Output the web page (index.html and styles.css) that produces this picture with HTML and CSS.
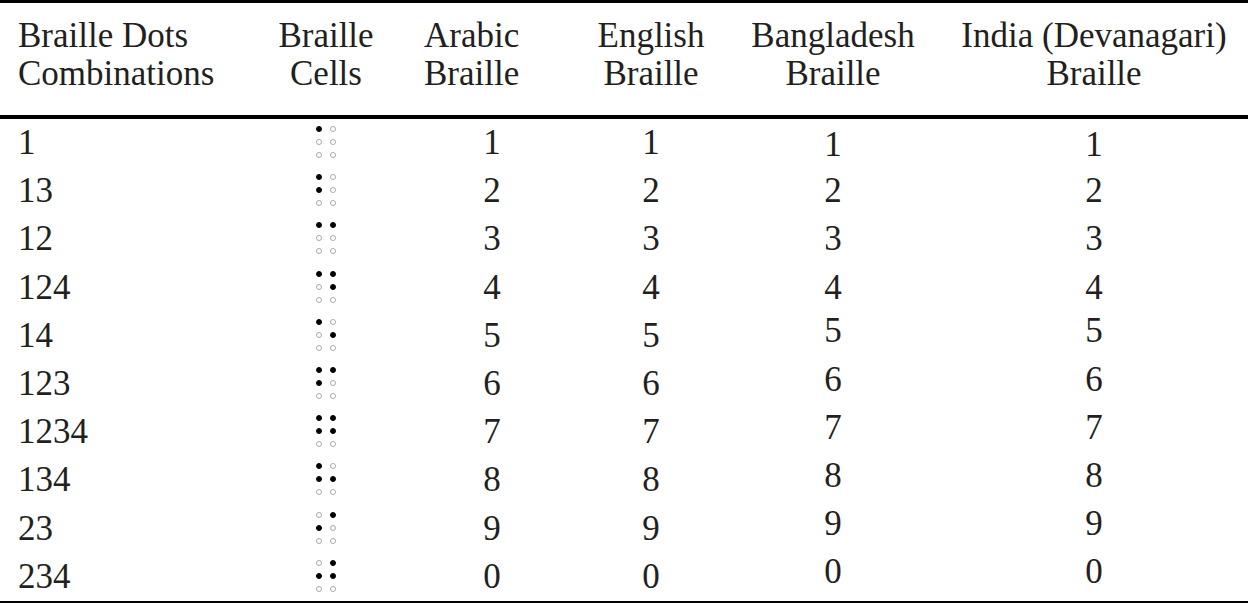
FILE: index.html
```html
<!DOCTYPE html>
<html>
<head>
<meta charset="utf-8">
<link rel="stylesheet" href="styles.css">
</head>
<body>
<div class="tbl">
  <div class="head">
    <div class="h c1">Braille Dots<br>Combinations</div>
    <div class="h c2">Braille<br>Cells</div>
    <div class="h c3">Arabic<br>Braille</div>
    <div class="h c4">English<br>Braille</div>
    <div class="h c5">Bangladesh<br>Braille</div>
    <div class="h c6">India (Devanagari)<br>Braille</div>
  </div>
  <div class="body">
    <div class="row"><div class="c1">1</div><div class="c2"><div class="cell"><i class="on"></i><i></i><i></i><i></i><i></i><i></i></div></div><div class="c3">1</div><div class="c4">1</div><div class="c5 lo">1</div><div class="c6 lo">1</div></div>
    <div class="row"><div class="c1">13</div><div class="c2"><div class="cell"><i class="on"></i><i></i><i class="on"></i><i></i><i></i><i></i></div></div><div class="c3">2</div><div class="c4">2</div><div class="c5">2</div><div class="c6">2</div></div>
    <div class="row"><div class="c1">12</div><div class="c2"><div class="cell"><i class="on"></i><i class="on"></i><i></i><i></i><i></i><i></i></div></div><div class="c3">3</div><div class="c4">3</div><div class="c5">3</div><div class="c6">3</div></div>
    <div class="row"><div class="c1">124</div><div class="c2"><div class="cell"><i class="on"></i><i class="on"></i><i></i><i class="on"></i><i></i><i></i></div></div><div class="c3">4</div><div class="c4">4</div><div class="c5">4</div><div class="c6">4</div></div>
    <div class="row"><div class="c1">14</div><div class="c2"><div class="cell"><i class="on"></i><i></i><i></i><i class="on"></i><i></i><i></i></div></div><div class="c3">5</div><div class="c4">5</div><div class="c5 hi">5</div><div class="c6 hi">5</div></div>
    <div class="row"><div class="c1">123</div><div class="c2"><div class="cell"><i class="on"></i><i class="on"></i><i class="on"></i><i></i><i></i><i></i></div></div><div class="c3">6</div><div class="c4">6</div><div class="c5 hi">6</div><div class="c6 hi">6</div></div>
    <div class="row"><div class="c1">1234</div><div class="c2"><div class="cell"><i class="on"></i><i class="on"></i><i class="on"></i><i class="on"></i><i></i><i></i></div></div><div class="c3">7</div><div class="c4">7</div><div class="c5 hi">7</div><div class="c6 hi">7</div></div>
    <div class="row"><div class="c1">134</div><div class="c2"><div class="cell"><i class="on"></i><i></i><i class="on"></i><i class="on"></i><i></i><i></i></div></div><div class="c3">8</div><div class="c4">8</div><div class="c5 hi">8</div><div class="c6 hi">8</div></div>
    <div class="row"><div class="c1">23</div><div class="c2"><div class="cell"><i></i><i class="on"></i><i class="on"></i><i></i><i></i><i></i></div></div><div class="c3">9</div><div class="c4">9</div><div class="c5 hi">9</div><div class="c6 hi">9</div></div>
    <div class="row"><div class="c1">234</div><div class="c2"><div class="cell"><i></i><i class="on"></i><i class="on"></i><i class="on"></i><i></i><i></i></div></div><div class="c3">0</div><div class="c4">0</div><div class="c5 hi">0</div><div class="c6 hi">0</div></div>
  </div>
</div>
</body>
</html>
```

FILE: styles.css
```css
html, body {
  margin: 0;
  padding: 0;
  background: #ffffff;
}
body {
  font-family: "Liberation Serif", "Times New Roman", serif;
  font-size: 35px;
  color: #231f20;
}
.tbl {
  width: 1248px;
  border-top: 3px solid #000;
  border-bottom: 3px solid #000;
}
.head, .row {
  display: grid;
  grid-template-columns: 260px 132px 168px 182px 182px 324px;
}
.head {
  border-bottom: 4px solid #000;
  padding: 14px 0 22px;
  line-height: 38px;
}
.h.c1 { padding-left: 18px; }
.h.c2 { text-align: center; }
.h.c3 { padding-left: 32px; }
.h.c4, .h.c5 { text-align: center; }
.h.c6 { text-align: center; padding-left: 16px; }
.row {
  height: 48.2px;
}
.row > div {
  display: flex;
  align-items: center;
  line-height: 36px;
  box-sizing: border-box;
}
.row .c1 { padding-left: 18px; }
.row .c2 { justify-content: center; }
.row .c3 { justify-content: center; padding-left: 32px; }
.row .c4, .row .c5 { justify-content: center; }
.row .c6 { justify-content: center; padding-left: 16px; }
.row .lo { padding-top: 4px; }
.row .hi { padding-bottom: 9px; }
.cell {
  display: grid;
  grid-template-columns: 6px 6px;
  grid-auto-rows: 6px;
  column-gap: 8px;
  row-gap: 7px;
  margin-top: -2px;
}
.cell i {
  display: block;
  width: 6px;
  height: 6px;
  border-radius: 50%;
  box-sizing: border-box;
  border: 1px solid #aaaaaa;
}
.cell i.on {
  background: #000;
  border-color: #000;
}
```
